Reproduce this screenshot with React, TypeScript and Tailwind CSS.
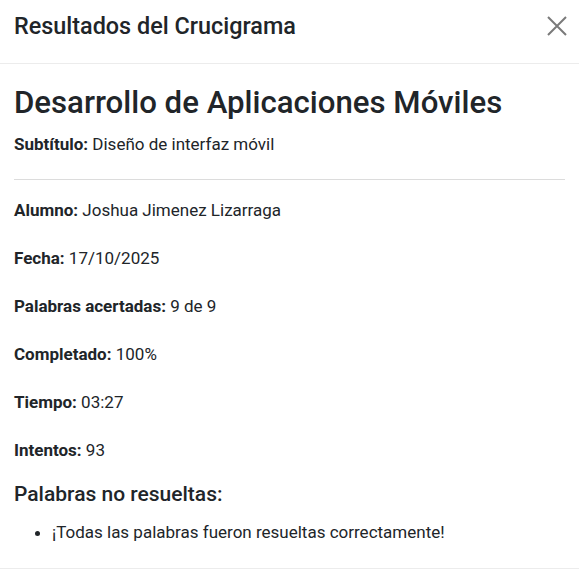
import React from "react";

const rows: [string, string][] = [
  ["Alumno:", "Joshua Jimenez Lizarraga"],
  ["Fecha:", "17/10/2025"],
  ["Palabras acertadas:", "9 de 9"],
  ["Completado:", "100%"],
  ["Tiempo:", "03:27"],
  ["Intentos:", "93"],
];

export default function App() {
  return (
    <div className="w-[579px] h-[577px] bg-white text-[#212529] overflow-hidden" style={{ fontFamily: "Roboto, 'Noto Sans', sans-serif" }}>
      <div className="flex items-start justify-between h-[64px] pl-[14px] pr-[12px] pt-[9px] border-b border-[#ececec]">
        <h5 className="text-[23.4px] leading-[35px] font-medium">Resultados del Crucigrama</h5>
        <button className="w-[20px] h-[20px] mt-[7px] flex items-center justify-center text-[#7a7a7a]" aria-label="Cerrar">
          <svg width="20" height="20" viewBox="0 0 20 20" fill="none" stroke="currentColor" strokeWidth="2">
            <path d="M1 1 L19 19 M19 1 L1 19" />
          </svg>
        </button>
      </div>
      <div className="px-[14px] pt-[20px] border-b border-[#ececec] h-[505px]">
        <h3 className="text-[31.2px] leading-[37px] font-medium">Desarrollo de Aplicaciones Móviles</h3>
        <p className="text-[17px] leading-[25.5px] mt-[11px]">
          <strong className="font-bold">Subtítulo:</strong> Diseño de interfaz móvil
        </p>
        <hr className="mt-[21px] mb-[18px] border-t border-[#dcdcdc]" />
        <div className="flex flex-col gap-[22.5px]">
          {rows.map(([k, v]) => (
            <p key={k} className="text-[17px] leading-[25.5px]">
              <strong className="font-bold">{k}</strong> {v}
            </p>
          ))}
        </div>
        <h5 className="text-[21px] leading-[25px] font-medium mt-[19px]">Palabras no resueltas:</h5>
        <ul className="list-disc pl-[38px] mt-[13px] text-[17px] leading-[25.5px]">
          <li>¡Todas las palabras fueron resueltas correctamente!</li>
        </ul>
      </div>
    </div>
  );
}
